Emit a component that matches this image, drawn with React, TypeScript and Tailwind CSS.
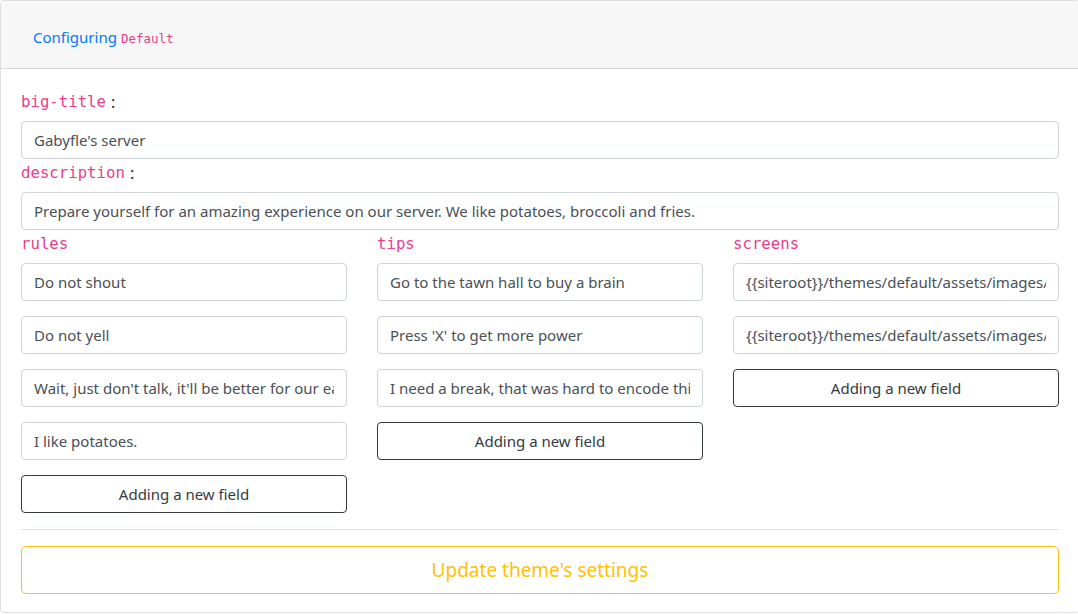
import React from "react";

const sans = { fontFamily: '"Noto Sans", "Open Sans", sans-serif' };
const mono = { fontFamily: '"DejaVu Sans Mono", "Liberation Mono", monospace' };

function Label({ name, colon = false }: { name: string; colon?: boolean }) {
  return (
    <div className="h-[25px] mb-[8px] pt-[3px] flex items-center">
      <code className="text-[15.7px] text-[#e83e8c]" style={mono}>{name}</code>
      {colon && <span className="ml-[5px] text-[16px] text-[#212529]">:</span>}
    </div>
  );
}

function Field({ value }: { value: string }) {
  return (
    <input
      readOnly
      defaultValue={value}
      className="block w-full h-[38px] px-[12px] border border-[#ced4da] rounded-[4px] text-[15px] text-[#495057] bg-white outline-none"
      style={sans}
    />
  );
}

function AddButton() {
  return (
    <button className="block w-full h-[38px] border border-[#343a40] rounded-[4px] text-[15px] text-[#343a40] bg-white text-center" style={sans}>
      Adding a new field
    </button>
  );
}

function Column({ name, items }: { name: string; items: string[] }) {
  return (
    <div className="flex flex-col">
      <Label name={name} />
      <div className="flex flex-col gap-[15px]">
        {items.map((v, i) => (
          <Field key={i} value={v} />
        ))}
        <AddButton />
      </div>
    </div>
  );
}

export default function App() {
  return (
    <div className="w-[1078px] h-[614px] bg-white overflow-hidden" style={sans}>
      <div className="w-[1080px] h-[613px] border border-[rgba(0,0,0,0.125)] rounded-[4px] flex flex-col overflow-hidden">
        <div className="h-[68px] shrink-0 bg-[#f7f7f7] border-b border-[rgba(0,0,0,0.125)] flex items-center px-[32px] pt-[6px]">
          <div className="flex items-baseline">
            <span className="text-[15px] text-[#007bff]">Configuring</span>
            <code className="ml-[4px] text-[12.5px] text-[#e83e8c]" style={mono}>Default</code>
          </div>
        </div>
        <div className="px-[20px] pt-[19px] flex flex-col">
          <Label name="big-title" colon />
          <Field value="Gabyfle's server" />
          <Label name="description" colon />
          <Field value="Prepare yourself for an amazing experience on our server. We like potatoes, broccoli and fries." />
          <div className="grid grid-cols-3 gap-x-[30px] items-start">
            <Column
              name="rules"
              items={[
                "Do not shout",
                "Do not yell",
                "Wait, just don't talk, it'll be better for our ears",
                "I like potatoes.",
              ]}
            />
            <Column
              name="tips"
              items={[
                "Go to the tawn hall to buy a brain",
                "Press 'X' to get more power",
                "I need a break, that was hard to encode this",
              ]}
            />
            <Column
              name="screens"
              items={[
                "{{siteroot}}/themes/default/assets/images/background.jpg",
                "{{siteroot}}/themes/default/assets/images/background2.jpg",
              ]}
            />
          </div>
          <hr className="mt-[16px] mb-[16px] border-0 border-t border-[rgba(0,0,0,0.1)]" />
          <button className="block w-full h-[48px] border border-[#ffc107] rounded-[5px] text-[19px] text-[#ffc107] bg-white text-center" style={sans}>
            Update theme's settings
          </button>
        </div>
      </div>
    </div>
  );
}
